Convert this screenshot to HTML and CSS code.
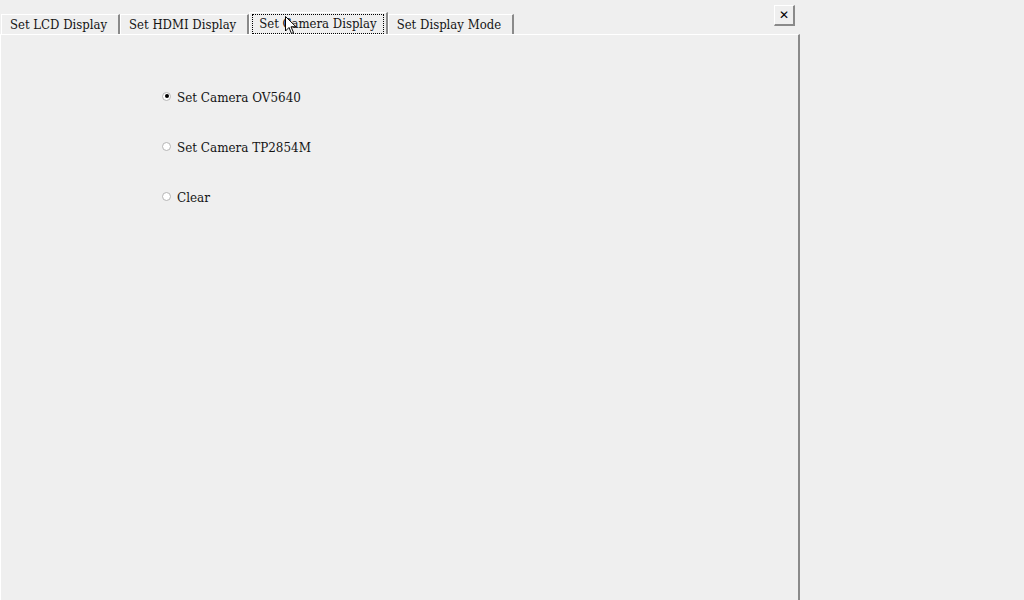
FILE: index.html
```html
<!DOCTYPE html>
<html>
<head>
    <title>Display Settings</title>
    <link rel="stylesheet" href="styles.css">
</head>
<body>
    <div class="window">
        <div class="tab-area">
            <div class="tab-bar">
                <div class="tab">Set LCD Display</div>
                <div class="tab">Set HDMI Display</div>
                <div class="tab active"><span class="focus">Set Camera Display</span></div>
                <div class="tab">Set Display Mode</div>
            </div>
            <div class="panel">
                <div class="options">
                    <label class="option"><span class="radio checked"></span>Set Camera OV5640</label>
                    <label class="option"><span class="radio"></span>Set Camera TP2854M</label>
                    <label class="option"><span class="radio"></span>Clear</label>
                </div>
            </div>
        </div>
        <button class="close-btn">&#x2715;</button>
    </div>

    <!-- mouse pointer over the active tab -->
    <svg class="cursor" width="12" height="19" viewBox="0 0 12 19">
        <path d="M0.5 0.5 L0.5 15 L4 11.5 L6.5 17.5 L8.5 16.5 L6 10.8 L11 10.8 Z" fill="#fff" stroke="#000" stroke-width="1"/>
    </svg>
</body>
</html>
```

FILE: styles.css
```css
body {
    margin: 0;
    background-color: #efefef;
    font-family: "DejaVu Serif Condensed", "DejaVu Serif", serif;
    font-stretch: condensed;
    font-size: 13.3px;
    color: #141414;
}
.window {
    display: flex;
    height: 600px;
    overflow: hidden;
}
.tab-area {
    width: 800px;
    display: flex;
    flex-direction: column;
    padding-top: 12px;
}
.tab-bar {
    display: flex;
    align-items: flex-end;
    padding-left: 1px;
    height: 22px;
    font-size: 13px;
}
.tab {
    height: 20px;
    line-height: 20px;
    padding: 0 11px 0 8px;
    border-left: 1px solid #ffffff;
    border-top: 1px solid #ffffff;
    border-right: 2px solid #8a8a8a;
    white-space: nowrap;
    box-sizing: border-box;
}
.tab.active {
    height: 22px;
    line-height: 20px;
    padding: 1px 2px 0 2px;
}
.focus {
    display: inline-block;
    border: 1px dotted #000;
    height: 18px;
    line-height: 18px;
    padding: 0 6px;
}
.panel {
    flex: 1;
    border-top: 1px solid #ffffff;
    border-left: 1px solid #ffffff;
    border-right: 2px solid #8a8a8a;
    width: 800px;
    box-sizing: border-box;
}
.options {
    display: flex;
    flex-direction: column;
    gap: 32px;
    padding: 53px 0 0 161px;
}
.option {
    display: flex;
    align-items: center;
    height: 18px;
    gap: 6px;
}
.radio {
    width: 9px;
    height: 9px;
    border-radius: 50%;
    background: #ffffff;
    border: 1px solid #b5b5b5;
    box-sizing: border-box;
    display: flex;
    align-items: center;
    justify-content: center;
    position: relative;
    top: -1px;
}
.radio.checked::after {
    content: "";
    width: 4px;
    height: 4px;
    border-radius: 50%;
    background: #000;
}
.close-btn {
    margin: 5px 0 0 -26px;
    width: 21px;
    height: 21px;
    padding: 0;
    background: #efefef;
    border: none;
    border-top: 1px solid #ffffff;
    border-left: 1px solid #ffffff;
    border-right: 2px solid #8a8a8a;
    border-bottom: 2px solid #8a8a8a;
    font-family: "DejaVu Sans", sans-serif;
    font-size: 12px;
    font-weight: bold;
    color: #000;
    line-height: 16px;
}
.cursor {
    position: absolute;
    left: 285px;
    top: 16px;
}
```
